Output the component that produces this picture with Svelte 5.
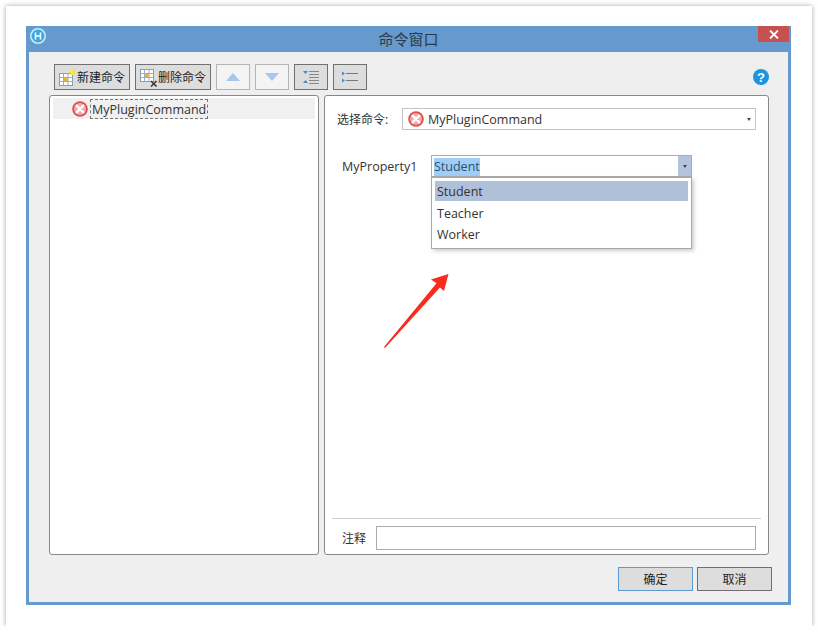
<script lang="ts">
  const cmd = "MyPluginCommand";
  const options = ["Student", "Teacher", "Worker"];
  let selected = $state("Student");
</script>

{#snippet errorIcon()}
  <svg class="err" width="16" height="16" viewBox="0 0 16 16" aria-hidden="true">
    <circle cx="8" cy="8" r="7.800" fill="#de5050" />
    <circle cx="8" cy="8" r="6" fill="#f3a9a9" />
    <path d="M4.800 4.800l6.400 6.400M11.200 4.800l-6.400 6.400" stroke="#fff" stroke-width="2.400" stroke-linecap="round" />
  </svg>
{/snippet}

<div class="sheet">
  <div class="window">
    <header class="titlebar">
      <svg class="logo" width="18" height="18" viewBox="0 0 18 18" aria-hidden="true">
        <circle cx="9" cy="9" r="7.200" fill="#3fa6e0" stroke="#bff0f5" stroke-width="1.600" />
        <path d="M6.500 5.500v7M11.500 5.500v7M6.500 9h5" stroke="#fff" stroke-width="1.500" fill="none" />
      </svg>
      <span class="title">命令窗口</span>
      <button class="close" aria-label="关闭">
        <svg width="10" height="9" viewBox="0 0 10 9"><path d="M1 .5l8 8M9 .5l-8 8" stroke="#fff" stroke-width="1.800" /></svg>
      </button>
    </header>

    <div class="body">
      <div class="toolbar">
        <button class="tool text">
          <svg width="22" height="22" viewBox="0 0 22 22" aria-hidden="true">
            <rect x="4.500" y="7.500" width="13" height="12" fill="#fff" stroke="#8c9cb0" />
            <path d="M4.500 11.500h13M4.500 15.500h13M8.500 7.500v12M13 7.500v12" stroke="#8fb0d0" fill="none" />
            <rect x="9" y="12" width="4" height="3" fill="#f0b040" />
            <path d="M17 1.500l1 3 3-1-2 2.500 2.500 1.500-3 .5.400 3-2-2.500-2 2 .8-3-2.800-1 3-.8z" fill="#f5e63c" />
          </svg>
          <span>新建命令</span>
        </button>
        <button class="tool text">
          <svg width="22" height="22" viewBox="0 0 22 22" aria-hidden="true">
            <rect x="4.500" y="3.500" width="13" height="12" fill="#fff" stroke="#8c9cb0" />
            <path d="M4.500 7.500h13M4.500 11.500h13M8.500 3.500v12M13 3.500v12" stroke="#8fb0d0" fill="none" />
            <rect x="9" y="8" width="4" height="3" fill="#f0b040" />
            <path d="M15 15l5.500 5.500M20.500 15L15 20.500" stroke="#333" stroke-width="1.500" />
          </svg>
          <span>删除命令</span>
        </button>
        <button class="tool icon off" aria-label="上移">
          <svg width="14" height="8" viewBox="0 0 14 8"><path d="M7 0l7 8H0z" fill="#a9c6ee" /></svg>
        </button>
        <button class="tool icon off" aria-label="下移">
          <svg width="14" height="8" viewBox="0 0 14 8"><path d="M0 0h14L7 8z" fill="#a9c6ee" /></svg>
        </button>
        <button class="tool icon" aria-label="减少缩进">
          <svg width="18" height="14" viewBox="0 0 18 14">
            <path d="M7 1.500h10M7 4.500h10M7 7.500h10M7 10.500h10M7 13.500h10" stroke="#888" fill="none" />
            <path d="M1 1h5L3.500 4zM1 13h5l-2.500-3z" fill="#4a86c8" />
          </svg>
        </button>
        <button class="tool icon" aria-label="列表">
          <svg width="18" height="12" viewBox="0 0 18 12">
            <path d="M5 2.500h12M5 9.500h12" stroke="#777" fill="none" />
            <path d="M1 .5l3 2-3 2zM1 7.500l3 2-3 2z" fill="#4a86c8" />
          </svg>
        </button>
        <svg class="help" width="16" height="16" viewBox="0 0 16 16" aria-hidden="true">
          <circle cx="8" cy="8" r="8" fill="#1b95e0" />
          <text x="8" y="12.500" text-anchor="middle">?</text>
        </svg>
      </div>

      <div class="panels">
        <section class="panel tree">
          <div class="tree-row">
            {@render errorIcon()}
            <span class="tree-label">{cmd}</span>
          </div>
        </section>

        <section class="panel detail">
          <div class="detail-main">
            <div class="command-row">
              <span class="command-label">选择命令:</span>
              <div class="command-select">
                {@render errorIcon()}
                <span>{cmd}</span>
                <i class="caret"></i>
              </div>
            </div>

            <div class="property-row">
              <span class="property-label">MyProperty1</span>
              <div class="combo">
                <div class="combo-input">
                  <span class="selection">{selected}</span>
                  <span class="combo-btn"><i class="caret"></i></span>
                </div>
                <ul class="combo-list">
                  {#each options as option}
                    <li class:active={option === selected}>{option}</li>
                  {/each}
                </ul>
              </div>
            </div>

            <svg class="arrow" width="70" height="78" viewBox="0 0 70 78" aria-hidden="true">
              <path d="M1 75L53.500 11.300 48 7.500 65.500 2 61 19 57 15.500 2 76z" fill="#fb2a1e" />
            </svg>
          </div>

          <div class="note-row">
            <span class="note-label">注释</span>
            <div class="note-input"></div>
          </div>
        </section>
      </div>

      <footer class="actions">
        <button class="action primary">确定</button>
        <button class="action">取消</button>
      </footer>
    </div>
  </div>
</div>

<style>
  :global(body) {
    margin: 0;
    background: #fff;
    font-family: "Open Sans", "Noto Sans CJK SC", sans-serif;
    font-size: 12px;
    color: #333;
  }

  .sheet {
    box-sizing: border-box;
    width: 806px;
    height: 620px;
    margin: 6px 0 0 6px;
    padding: 20px 0 0 20px;
    background: #fff;
    box-shadow: 0 0 5px rgba(0, 0, 0, 0.35);
  }

  .window {
    box-sizing: border-box;
    display: flex;
    flex-direction: column;
    width: 765px;
    height: 579px;
    padding: 0 3px 3px;
    background: #6699cc;
  }

  .titlebar {
    position: relative;
    display: flex;
    align-items: center;
    justify-content: center;
    flex: 0 0 26px;
    margin: 0 -3px;
  }

  .logo {
    position: absolute;
    left: 3px;
    top: 1px;
  }

  .title {
    font-size: 15px;
    line-height: 20px;
    color: #2b3a4a;
  }

  .close {
    position: absolute;
    top: 0;
    right: 2px;
    display: flex;
    align-items: center;
    justify-content: center;
    width: 31px;
    height: 16px;
    padding: 0;
    border: 0;
    background: #c75050;
  }

  .body {
    display: flex;
    flex-direction: column;
    flex: 1;
    padding: 12px 16px 11px 20px;
    background: #efefef;
  }

  .toolbar {
    display: flex;
    align-items: center;
    gap: 5px;
    height: 26px;
    padding-left: 5px;
  }

  .tool {
    box-sizing: border-box;
    display: flex;
    align-items: center;
    justify-content: center;
    height: 26px;
    padding: 0;
    border: 1px solid #707070;
    background: #dddddd;
    font: inherit;
    color: #222;
  }

  .tool.text {
    justify-content: flex-start;
    width: 76px;
  }

  .tool.text span {
    margin-top: -1px;
  }

  .tool.icon {
    width: 34px;
  }

  .tool.off {
    border-color: #b5b5b5;
    background: #f4f4f4;
  }

  .help {
    margin-left: auto;
    margin-right: 3px;
  }

  .help text {
    font-family: "Liberation Sans", sans-serif;
    font-size: 13px;
    font-weight: 700;
    fill: #fff;
  }

  .panels {
    display: flex;
    gap: 5px;
    height: 460px;
    margin: 5px 3px 0 0;
  }

  .panel {
    box-sizing: border-box;
    border: 1px solid #888;
    border-radius: 3px;
    background: #fff;
  }

  .tree {
    width: 270px;
    padding: 2px 3px;
  }

  .tree-row {
    display: flex;
    align-items: center;
    height: 21px;
    padding-left: 19px;
    background: #f0f0f0;
  }

  .tree-label {
    align-self: flex-end;
    box-sizing: border-box;
    height: 20px;
    margin-left: 2px;
    padding: 0 1px;
    border: 1px dashed #777;
    line-height: 20px;
    font-size: 12.500px;
    white-space: nowrap;
  }

  .err {
    flex: none;
  }

  .detail {
    display: flex;
    flex-direction: column;
    width: 445px;
    padding: 0 7px;
  }

  .detail-main {
    position: relative;
    flex: 1;
  }

  .command-row {
    display: flex;
    align-items: center;
    gap: 14px;
    margin: 12px 5px 0 5px;
  }

  .command-label {
    width: 51px;
    margin-top: -1px;
    white-space: nowrap;
  }

  .command-select {
    position: relative;
    box-sizing: border-box;
    display: flex;
    align-items: center;
    gap: 4px;
    flex: 1;
    height: 22px;
    padding-left: 5px;
    border: 1px solid #c4c4c4;
    font-size: 12.500px;
  }

  .caret {
    width: 0;
    height: 0;
    border: 2.500px solid transparent;
    border-top: 3px solid #444;
    border-bottom: 0;
  }

  .command-select .caret {
    position: absolute;
    right: 4px;
    top: 9px;
  }

  .property-row {
    display: flex;
    align-items: flex-start;
    gap: 15px;
    margin: 25px 0 0 10px;
  }

  .property-label {
    width: 74px;
    line-height: 24px;
    font-size: 12.500px;
    white-space: nowrap;
  }

  .combo {
    position: relative;
    width: 261px;
  }

  .combo-input {
    box-sizing: border-box;
    display: flex;
    align-items: center;
    height: 22px;
    padding-left: 2px;
    border: 1px solid #ababab;
    background: #fff;
    font-size: 12.500px;
  }

  .selection {
    margin-top: 1px;
    background: #9fcdf7;
    color: #2e4f70;
    line-height: 18px;
  }

  .combo-btn {
    display: flex;
    align-items: center;
    justify-content: center;
    width: 13px;
    height: 20px;
    margin-left: auto;
    background: #b4c4dc;
  }

  .combo-list {
    position: absolute;
    left: 0;
    right: 0;
    top: 22px;
    box-sizing: border-box;
    height: 72px;
    margin: 0;
    padding: 3px;
    list-style: none;
    border: 1px solid #a8a8a8;
    background: #fff;
    box-shadow: 2px 2px 4px rgba(0, 0, 0, 0.2);
    font-size: 12.500px;
  }

  .combo-list li {
    height: 21px;
    padding-left: 2px;
    line-height: 21px;
  }

  .combo-list li.active {
    height: 20px;
    margin-bottom: 2px;
    line-height: 22px;
    background: #b0c0d9;
  }

  .arrow {
    position: absolute;
    left: 51px;
    top: 176px;
  }

  .note-row {
    display: flex;
    align-items: center;
    gap: 10px;
    height: 36px;
    padding: 7px 5px 4px 10px;
    box-sizing: border-box;
    border-top: 1px solid #cfcfcf;
  }

  .note-label {
    width: 24px;
    margin-top: -1px;
    white-space: nowrap;
  }

  .note-input {
    box-sizing: border-box;
    flex: 1;
    height: 24px;
    border: 1px solid #ababab;
    background: #fff;
  }

  .actions {
    display: flex;
    justify-content: flex-end;
    gap: 4px;
    margin-top: 12px;
  }

  .action {
    box-sizing: border-box;
    width: 75px;
    height: 24px;
    padding: 0;
    border: 1px solid #707070;
    background: #dddddd;
    font: inherit;
    color: #222;
  }

  .action.primary {
    border-color: #5b9bd5;
  }
</style>
